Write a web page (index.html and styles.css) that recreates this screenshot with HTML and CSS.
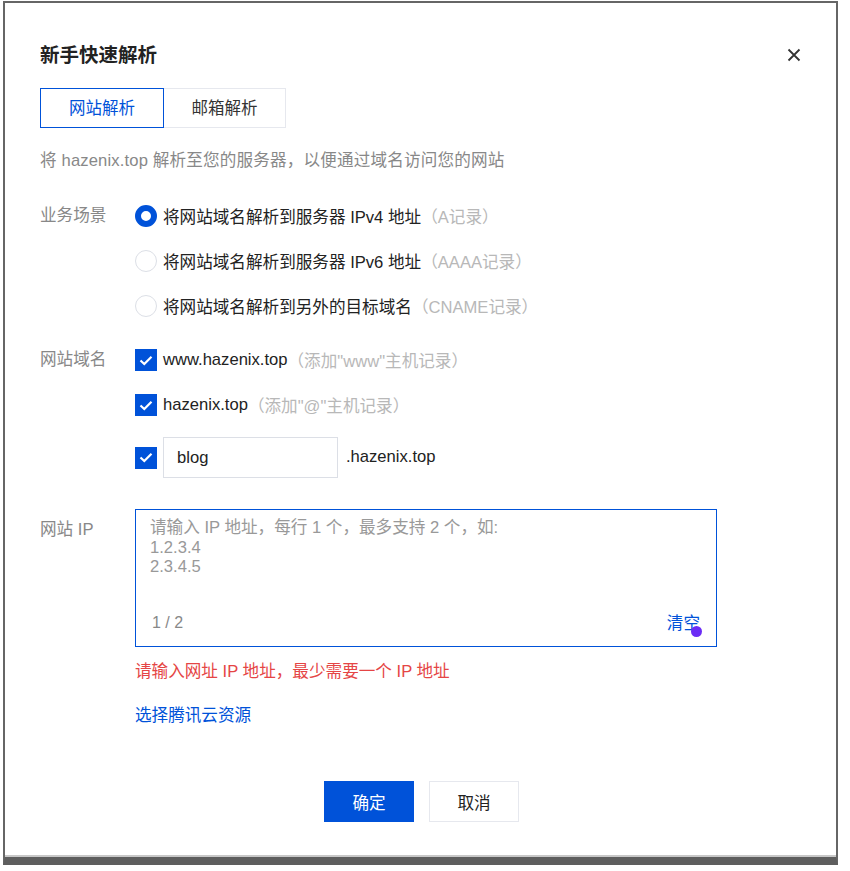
FILE: index.html
```html
<!DOCTYPE html>
<html lang="zh-CN">
<head>
    <meta charset="UTF-8">
    <title>新手快速解析</title>
    <link rel="stylesheet" href="styles.css">
</head>
<body>
    <div class="frame">
        <div class="dialog">
            <div class="header">
                <h2 class="title">新手快速解析</h2>
                <button class="close" aria-label="关闭">
                    <svg width="14" height="14" viewBox="0 0 14 14">
                        <path d="M1.5 1.5 L12.5 12.5 M12.5 1.5 L1.5 12.5" stroke="#333" stroke-width="1.8" fill="none"/>
                    </svg>
                </button>
            </div>

            <div class="tabs">
                <div class="tab active">网站解析</div>
                <div class="tab">邮箱解析</div>
            </div>

            <p class="desc">将 hazenix.top 解析至您的服务器，以便通过域名访问您的网站</p>

            <div class="form-row scene">
                <div class="label">业务场景</div>
                <div class="controls">
                    <div class="option">
                        <span class="radio checked"></span>
                        <span>将网站域名解析到服务器 IPv4 地址</span><span class="hint">（A记录）</span>
                    </div>
                    <div class="option">
                        <span class="radio"></span>
                        <span>将网站域名解析到服务器 IPv6 地址</span><span class="hint">（AAAA记录）</span>
                    </div>
                    <div class="option">
                        <span class="radio"></span>
                        <span>将网站域名解析到另外的目标域名</span><span class="hint">（CNAME记录）</span>
                    </div>
                </div>
            </div>

            <div class="form-row domain">
                <div class="label">网站域名</div>
                <div class="controls">
                    <div class="option">
                        <span class="checkbox"><svg width="14" height="11" viewBox="0 0 14 11"><path d="M1.5 5.5 L5.3 9 L12.5 1.8" stroke="#fff" stroke-width="2.2" fill="none"/></svg></span>
                        <span>www.hazenix.top</span><span class="hint">（添加"www"主机记录）</span>
                    </div>
                    <div class="option">
                        <span class="checkbox"><svg width="14" height="11" viewBox="0 0 14 11"><path d="M1.5 5.5 L5.3 9 L12.5 1.8" stroke="#fff" stroke-width="2.2" fill="none"/></svg></span>
                        <span>hazenix.top</span><span class="hint">（添加"@"主机记录）</span>
                    </div>
                    <div class="option custom">
                        <span class="checkbox"><svg width="14" height="11" viewBox="0 0 14 11"><path d="M1.5 5.5 L5.3 9 L12.5 1.8" stroke="#fff" stroke-width="2.2" fill="none"/></svg></span>
                        <div class="input">blog</div>
                        <span class="suffix">.hazenix.top</span>
                    </div>
                </div>
            </div>

            <div class="form-row ip">
                <div class="label">网站 IP</div>
                <div class="controls">
                    <div class="textarea">
                        <div class="placeholder">请输入 IP 地址，每行 1 个，最多支持 2 个，如:<br>1.2.3.4<br>2.3.4.5</div>
                        <div class="textarea-foot">
                            <span class="count">1 / 2</span>
                            <span class="clear">清空<i class="dot"></i></span>
                        </div>
                    </div>
                    <div class="error">请输入网址 IP 地址，最少需要一个 IP 地址</div>
                    <a class="link" href="#">选择腾讯云资源</a>
                </div>
            </div>

            <div class="footer">
                <button class="btn primary">确定</button>
                <button class="btn">取消</button>
            </div>
        </div>
    </div>
</body>
</html>
```

FILE: styles.css
```css
* {
    box-sizing: border-box;
}

body {
    margin: 0;
    background: #fff;
    font-family: "Liberation Sans", "Noto Sans CJK SC", sans-serif;
    color: #222;
}

.frame {
    margin: 1px 0 0 3px;
    width: 835px;
    height: 864px;
    border: 2px solid #666;
    border-bottom: 8px solid #5e5e5e;
    box-shadow: inset 0 -2px 0 #c8c8c8;
}

.dialog {
    padding: 38px 35px 0 35px;
}

.header {
    display: flex;
    justify-content: space-between;
    align-items: center;
    height: 28px;
}

.title {
    margin: 0;
    font-size: 19.5px;
    font-weight: bold;
    color: #222;
    line-height: 28px;
}

.close {
    border: none;
    background: none;
    padding: 0;
    width: 14px;
    height: 14px;
    cursor: pointer;
    display: flex;
}

.tabs {
    display: flex;
    margin-top: 19px;
}

.tab {
    width: 122px;
    height: 40px;
    line-height: 38px;
    text-align: center;
    font-size: 16.5px;
    color: #333;
    border: 1px solid #e6e8ee;
    border-left: none;
}

.tab.active {
    width: 124px;
    color: #0052d9;
    border: 1px solid #0052d9;
}

.desc {
    margin: 21px 0 0;
    font-size: 16.6px;
    letter-spacing: 0.15px;
    line-height: 24px;
    color: #888;
}

.form-row {
    display: flex;
}

.label {
    width: 95px;
    flex: none;
    font-size: 16.6px;
    line-height: 24px;
    color: #888;
}

.controls {
    display: flex;
    flex-direction: column;
}

.scene {
    margin-top: 31px;
}

.scene .controls {
    gap: 21px;
}

.option {
    display: flex;
    align-items: center;
    height: 24px;
    font-size: 16.6px;
    color: #222;
}

.hint {
    color: #b8b8b8;
}

.radio {
    width: 22px;
    height: 22px;
    border-radius: 50%;
    border: 1px solid #dcdfe6;
    margin-right: 6px;
    flex: none;
}

.radio.checked {
    border: 6px solid #0052d9;
}

.domain {
    margin-top: 30px;
}

.domain .controls {
    gap: 21px;
}

.checkbox {
    width: 22px;
    height: 22px;
    background: #0052d9;
    margin-right: 6px;
    flex: none;
    display: flex;
    align-items: center;
    justify-content: center;
}

.option.custom {
    height: 41px;
    margin-top: -1px;
}

.input {
    width: 175px;
    height: 41px;
    border: 1px solid #dcdfe6;
    padding-left: 13px;
    line-height: 39px;
    font-size: 16.6px;
    color: #222;
}

.suffix {
    margin-left: 8px;
    margin-top: -1px;
}

.ip {
    margin-top: 31px;
}

.ip .label {
    margin-top: 9px;
}

.textarea {
    position: relative;
    width: 582px;
    height: 138px;
    border: 1px solid #0052d9;
    padding: 8px 14px 0 14px;
    display: flex;
    flex-direction: column;
    justify-content: space-between;
}

.placeholder {
    font-size: 16.6px;
    line-height: 19.5px;
    color: #999;
}

.textarea-foot {
    display: flex;
    justify-content: space-between;
    align-items: flex-start;
    height: 36px;
    font-size: 16px;
}

.count {
    color: #888;
    margin-left: 2px;
    margin-top: 4px;
}

.clear {
    position: relative;
    color: #0052d9;
    font-size: 16.6px;
    margin-right: 2px;
}

.dot {
    position: absolute;
    right: -2px;
    top: 16px;
    width: 11px;
    height: 11px;
    border-radius: 50%;
    background: #6b2cf5;
}

.error {
    margin-top: 13px;
    font-size: 16.6px;
    line-height: 24px;
    color: #e54545;
}

.link {
    margin-top: 20px;
    font-size: 16.6px;
    line-height: 24px;
    color: #0052d9;
    text-decoration: none;
}

.footer {
    display: flex;
    justify-content: center;
    gap: 15px;
    margin-top: 53px;
    padding-left: 2px;
}

.btn {
    width: 90px;
    height: 41px;
    font-family: inherit;
    font-size: 16.6px;
    color: #222;
    background: #fff;
    border: 1px solid #e6e8ee;
    cursor: pointer;
}

.btn.primary {
    background: #0052d9;
    border-color: #0052d9;
    color: #fff;
}
```
